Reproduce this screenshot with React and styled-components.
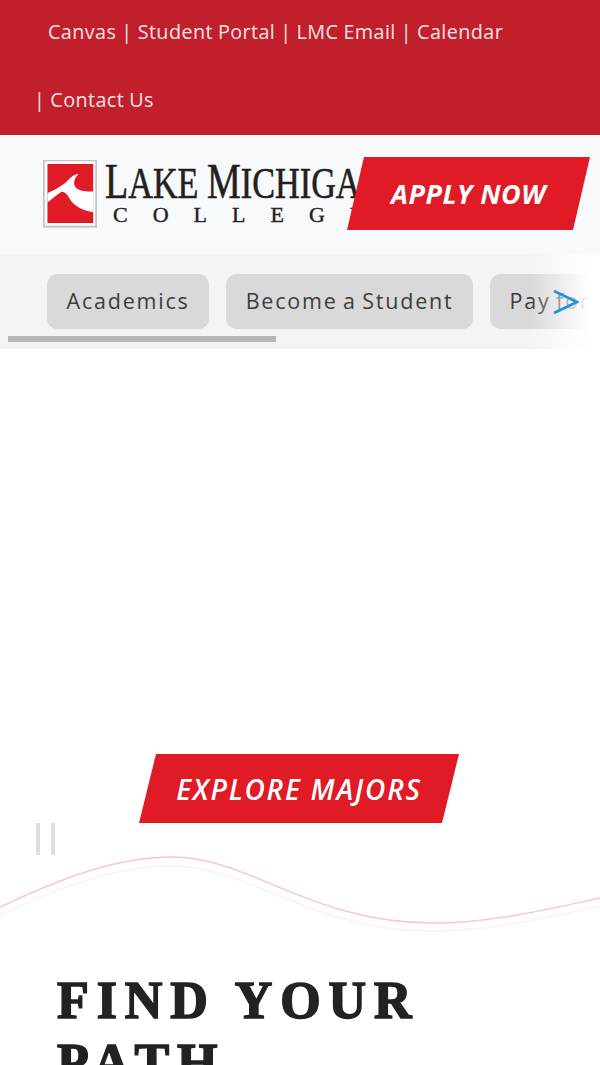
import React from 'react';
import styled, { createGlobalStyle } from 'styled-components';

const GlobalStyle = createGlobalStyle`
  html, body {
    margin: 0;
    padding: 0;
    background: #fff;
    font-family: "Open Sans", "Liberation Sans", sans-serif;
  }
`;

const Page = styled.div`
  width: 600px;
  height: 1065px;
  overflow: hidden;
  background: #fff;
`;

const TopBar = styled.div`
  height: 135px;
  box-sizing: border-box;
  padding: 0 60px 0 34px;
  background: #c01f2b;
  color: #fbe3e5;
  font-size: 19.8px;
  line-height: 68px;
  letter-spacing: 0.4px;
  word-spacing: -0.5px;
`;

const TopLines = styled.div`
  transform: translateY(-2px);
`;

const TopLink = styled.span`
  margin-left: ${({ $first }) => ($first ? '14px' : '0')};
  white-space: nowrap;
`;

const Header = styled.header`
  height: 119px;
  box-sizing: border-box;
  padding: 22px 10px 0 43px;
  display: flex;
  align-items: flex-start;
  background: #f7f9fb;
`;

const Logo = styled.div`
  flex: 0 0 304px;
  min-width: 0;
  display: flex;
  gap: 8px;
  padding-top: 3px;
`;

const LogoMark = styled.svg`
  flex: none;
  width: 54px;
  height: 68px;
`;

const LogoType = styled.div`
  flex: none;
  font-family: "Liberation Serif", serif;
  color: #231f20;
  white-space: nowrap;
`;

const LogoName = styled.div`
  font-size: 45px;
  line-height: 42px;
  transform: scaleX(0.76);
  transform-origin: left center;
  -webkit-text-stroke: 0.6px #231f20;
`;

const LogoCap = styled.span`
  font-size: 50px;
`;

const LogoCollege = styled.div`
  margin-left: 8px;
  font-size: 22px;
  line-height: 22px;
  letter-spacing: 25px;
  -webkit-text-stroke: 0.4px #231f20;
`;

const ApplyButton = styled.a`
  flex: 0 0 243px;
  height: 73px;
  display: flex;
  align-items: center;
  justify-content: center;
  clip-path: polygon(17px 0, 100% 0, 226px 100%, 0 100%);
  background: #e01b26;
  color: #fff;
  font-size: 27px;
  font-weight: 700;
  font-style: italic;
  letter-spacing: 0.5px;
`;

const NavBar = styled.nav`
  position: relative;
  height: 95px;
  box-sizing: border-box;
  padding-top: 20px;
  overflow: hidden;
  background: #f4f4f5;
`;

const Pills = styled.div`
  display: flex;
  gap: 17px;
  padding-left: 47px;
`;

const Pill = styled.a`
  flex: none;
  height: 55px;
  box-sizing: border-box;
  padding: 0 19.5px 2px;
  display: flex;
  align-items: center;
  border-radius: 10px;
  background: #d9d9da;
  color: #3d3d3d;
  font-size: 21.5px;
  letter-spacing: 1.8px;
  word-spacing: -2px;
  white-space: nowrap;
`;

const ScrollThumb = styled.div`
  width: 268px;
  height: 6px;
  margin: 7px 0 0 8px;
  background: #b6b6b6;
`;

const Fade = styled.div`
  position: absolute;
  top: 0;
  right: 0;
  bottom: 0;
  width: 70px;
  display: flex;
  align-items: flex-start;
  background: linear-gradient(to right, rgba(244, 244, 245, 0), #fff 85%);
`;

const Arrow = styled.svg`
  width: 26px;
  height: 26px;
  margin: 35px 0 0 23px;
`;

const Hero = styled.section`
  padding-top: 405px;
`;

const ExploreButton = styled.a`
  width: 320px;
  height: 69px;
  margin: 0 auto;
  transform: translateX(-1px);
  display: flex;
  align-items: center;
  justify-content: center;
  clip-path: polygon(17px 0, 100% 0, 303px 100%, 0 100%);
  background: #e01b26;
  color: #fff;
  font-size: 28px;
  font-weight: 600;
  font-style: italic;
  letter-spacing: 1.8px;
`;

const PauseControl = styled.div`
  display: flex;
  gap: 11px;
  height: 32px;
  padding: 0 0 0 36px;
`;

const PauseBar = styled.span`
  width: 4px;
  background: #dfdfdf;
`;

const Wave = styled.svg`
  display: block;
  width: 600px;
  height: 90px;
`;

const Section = styled.section`
  padding: 25px 57px 0;
`;

const Heading = styled.h1`
  margin: 0;
  width: 430px;
  color: #222;
  font-family: "Liberation Serif", serif;
  font-size: 52px;
  font-weight: 700;
  line-height: 62px;
  letter-spacing: 7.9px;
  -webkit-text-stroke: 1.6px #222;
`;

const topLinks = ['Student Portal', 'LMC Email', 'Calendar', 'Contact Us'];
const navItems = ['Academics', 'Become a Student', 'Pay for College'];

export default function App() {
  return (
    <Page>
      <GlobalStyle />
      <TopBar>
        <TopLines>
          <TopLink $first>Canvas</TopLink>
          {topLinks.map((link) => (
            <React.Fragment key={link}>
              {' '}
              <TopLink>| {link}</TopLink>
            </React.Fragment>
          ))}
        </TopLines>
      </TopBar>

      <Header>
        <Logo>
          <LogoMark viewBox="0 0 160 205">
            <rect x="1" y="1" width="158" height="200" fill="#fff" stroke="#c4c4c4" strokeWidth="6" />
            <rect x="12" y="12" width="138" height="178" fill="#e01b26" />
            <path
              d="M12 100C40 88 65 72 80 55C90 45 98 42 106 42C92 55 88 72 98 84C110 95 130 96 150 95L150 157C120 152 92 140 78 115C70 100 60 93 52 97C38 106 25 118 12 128Z"
              fill="#fff"
            />
          </LogoMark>
          <LogoType>
            <LogoName>
              <LogoCap>L</LogoCap>AKE <LogoCap>M</LogoCap>ICHIGAN
            </LogoName>
            <LogoCollege>COLLEGE</LogoCollege>
          </LogoType>
        </Logo>
        <ApplyButton>APPLY NOW</ApplyButton>
      </Header>

      <NavBar>
        <Pills>
          {navItems.map((item) => (
            <Pill key={item}>{item}</Pill>
          ))}
        </Pills>
        <ScrollThumb />
        <Fade>
          <Arrow viewBox="0 0 26 26" fill="none" stroke="#1f95d8" strokeWidth="2.8">
            <path d="M1 2L24 13L1 24" />
          </Arrow>
        </Fade>
      </NavBar>

      <Hero>
        <ExploreButton>EXPLORE MAJORS</ExploreButton>
        <PauseControl>
          <PauseBar />
          <PauseBar />
        </PauseControl>
      </Hero>

      <Wave viewBox="0 0 600 90" fill="none">
        <path
          d="M0 60C60 32 115 11 172 11C250 11 310 76 433 76C490 76 550 62 600 51"
          stroke="#f6f6f6"
          strokeWidth="2"
        />
        <path
          d="M0 52C60 24 115 2 172 2C250 2 310 68 433 68C490 68 550 54 600 43"
          stroke="#f9c6c8"
          strokeWidth="1.5"
        />
      </Wave>

      <Section>
        <Heading>FIND YOUR PATH</Heading>
      </Section>
    </Page>
  );
}
